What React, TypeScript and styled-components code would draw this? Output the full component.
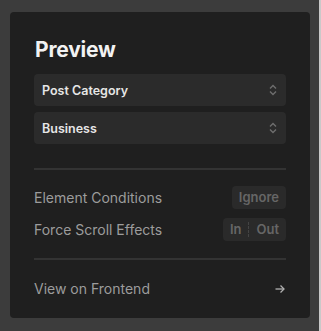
import React from "react";
import styled, { createGlobalStyle } from "styled-components";

const Global = createGlobalStyle`
  html, body { margin: 0; padding: 0; background: #3c3c3c; }
  body { font-family: Inter, "Noto Sans", sans-serif; -webkit-font-smoothing: antialiased; }
`;

const Frame = styled.div`
  width: 321px;
  height: 331px;
  display: flex;
`;

const Main = styled.div`
  flex: 1;
  box-sizing: border-box;
  padding: 12px 9px 13px 10px;
  display: flex;
`;

const Edge = styled.div`
  width: 2px;
  background: #c9c9c9;
`;

const Panel = styled.div`
  flex: 1;
  background: #1f1f1f;
  border-radius: 4px;
  padding: 25px 24px 0 24px;
  display: flex;
  flex-direction: column;
`;

const Title = styled.h1`
  margin: 0 0 12px 1px;
  font-size: 21px;
  line-height: 25px;
  font-weight: 700;
  color: #f2f2f2;
  letter-spacing: -0.2px;
`;

const Select = styled.div`
  height: 32px;
  background: #2b2b2b;
  border-radius: 4px;
  display: flex;
  align-items: center;
  justify-content: space-between;
  padding: 0 8px;
  margin-bottom: 6px;
  font-size: 12.5px;
  font-weight: 600;
  color: #e6e6e6;
`;

const Divider = styled.div<{ $top: number; $bottom: number }>`
  height: 2px;
  background: #333333;
  margin: ${(p) => `${p.$top}px 0 ${p.$bottom}px`};
`;

const Row = styled.div`
  display: flex;
  align-items: center;
  justify-content: space-between;
  height: 23px;
  margin-bottom: 9px;
  font-size: 14px;
  color: #9c9c9c;
`;

const Chip = styled.div`
  height: 23px;
  background: #2a2a2a;
  border-radius: 4px;
  display: flex;
  align-items: center;
  font-size: 13px;
  font-weight: 600;
  color: #666666;
`;

const ChipPart = styled.span`
  padding: 0 7px;
  line-height: 23px;
`;

const ChipSep = styled.span`
  width: 0;
  height: 15px;
  border-left: 1px dashed #444;
`;

const Link = styled.div`
  display: flex;
  align-items: center;
  justify-content: space-between;
  font-size: 14px;
  color: #9c9c9c;
`;

const Chevrons = () => (
  <svg width="10" height="12" viewBox="0 0 10 12" fill="none" stroke="#6e6e6e" strokeWidth="1.4">
    <path d="M2 4.5 L5 1.5 L8 4.5" />
    <path d="M2 7.5 L5 10.5 L8 7.5" />
  </svg>
);

const Arrow = () => (
  <svg width="12" height="12" viewBox="0 0 12 12" fill="none" stroke="#b0b0b0" strokeWidth="1.3">
    <path d="M1.5 6 H10" />
    <path d="M6.5 2.5 L10 6 L6.5 9.5" />
  </svg>
);

export default function App() {
  return (
    <>
      <Global />
      <Frame>
        <Main>
          <Panel>
            <Title>Preview</Title>
            <Select>
              <span>Post Category</span>
              <Chevrons />
            </Select>
            <Select>
              <span>Business</span>
              <Chevrons />
            </Select>
            <Divider $top={18} $bottom={16} />
            <Row>
              <span>Element Conditions</span>
              <Chip>
                <ChipPart>Ignore</ChipPart>
              </Chip>
            </Row>
            <Row>
              <span>Force Scroll Effects</span>
              <Chip>
                <ChipPart>In</ChipPart>
                <ChipSep />
                <ChipPart>Out</ChipPart>
              </Chip>
            </Row>
            <Divider $top={8} $bottom={20} />
            <Link>
              <span>View on Frontend</span>
              <Arrow />
            </Link>
          </Panel>
        </Main>
        <Edge />
      </Frame>
    </>
  );
}
